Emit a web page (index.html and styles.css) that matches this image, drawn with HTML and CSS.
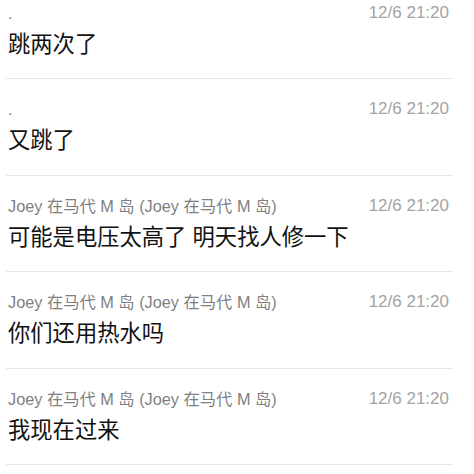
FILE: index.html
```html
<!DOCTYPE html>
<html lang="zh-CN">
<head>
  <meta charset="UTF-8" />
  <meta name="viewport" content="width=device-width, initial-scale=1.0"/>
  <title>消息记录</title>
  <link rel="stylesheet" href="styles.css">
</head>
<body>
  <ul class="lista">
    <li class="msg">
      <div class="topo">
        <span class="nome">.</span>
        <span class="hora">12/6 21:20</span>
      </div>
      <p class="texto">跳两次了</p>
    </li>
    <li class="msg">
      <div class="topo">
        <span class="nome">.</span>
        <span class="hora">12/6 21:20</span>
      </div>
      <p class="texto">又跳了</p>
    </li>
    <li class="msg">
      <div class="topo">
        <span class="nome">Joey 在马代 M 岛 (Joey 在马代 M 岛)</span>
        <span class="hora">12/6 21:20</span>
      </div>
      <p class="texto">可能是电压太高了 明天找人修一下</p>
    </li>
    <li class="msg">
      <div class="topo">
        <span class="nome">Joey 在马代 M 岛 (Joey 在马代 M 岛)</span>
        <span class="hora">12/6 21:20</span>
      </div>
      <p class="texto">你们还用热水吗</p>
    </li>
    <li class="msg">
      <div class="topo">
        <span class="nome">Joey 在马代 M 岛 (Joey 在马代 M 岛)</span>
        <span class="hora">12/6 21:20</span>
      </div>
      <p class="texto">我现在过来</p>
    </li>
  </ul>
</body>
</html>
```

FILE: styles.css
```css
body {
  margin: 0;
  background: #fff;
  font-family: "Liberation Sans", "Noto Sans CJK SC", sans-serif;
  color: #111;
  overflow: hidden;
}

.lista {
  list-style: none;
  margin: -17.5px 0 0 6px;
  padding: 0;
  width: 447px;
}

.msg {
  padding: 20px 4px 18.5px 2px;
  border-bottom: 1px solid #e6e6e6;
}

.topo {
  display: flex;
  justify-content: space-between;
  align-items: center;
  height: 20px;
  line-height: 20px;
}

.nome {
  font-size: 16.3px;
  color: #7f7f7f;
}

.hora {
  font-size: 17px;
  color: #a3a3a3;
}

.texto {
  margin: 6px 0 0;
  font-size: 22.3px;
  line-height: 31px;
}
```
